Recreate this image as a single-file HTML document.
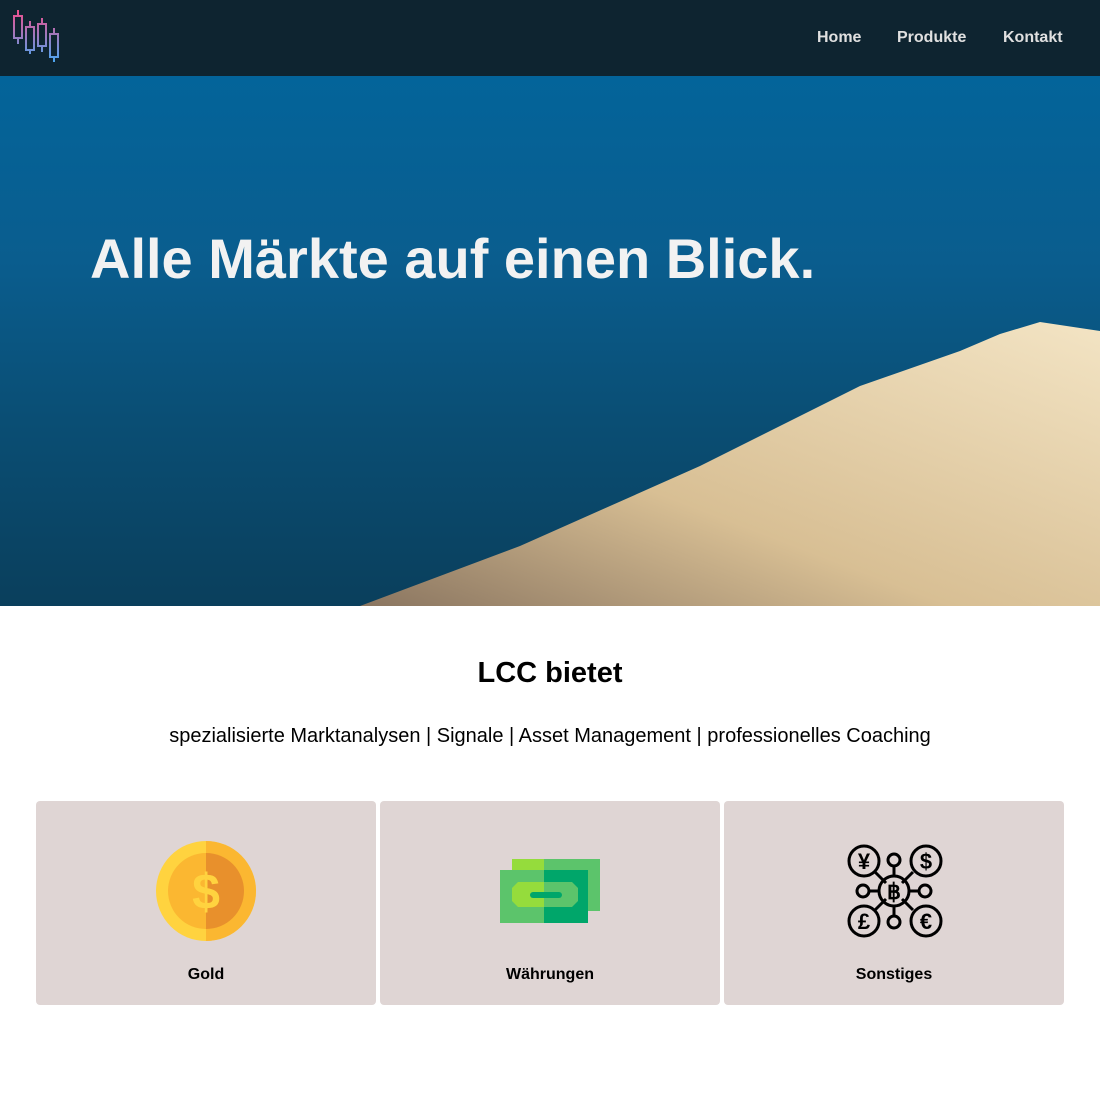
<!DOCTYPE html>
<html><head><meta charset="utf-8"><style>
*{margin:0;padding:0;box-sizing:border-box}
body{width:1100px;height:1100px;background:#fff;font-family:"Liberation Sans",Arial,sans-serif;overflow:hidden;position:relative}
.nav{position:absolute;top:0;left:0;width:1100px;height:76px;background:#0e2430;z-index:2}
.nav a{position:absolute;top:29px;color:#e0e0e0;font-weight:bold;font-size:16px;text-decoration:none}
.hero{position:absolute;top:76px;left:0;width:1100px;height:530px;background:linear-gradient(180deg,#03649a 0%,#0a5d8e 35%,#0a4e74 65%,#0a3f5c 100%);overflow:hidden}
.hero h1{position:absolute;left:90px;top:150px;color:#f2f2f2;font-size:56px;font-weight:bold}
h2{position:absolute;top:657px;width:1100px;text-align:center;font-size:29px;font-weight:bold}
.sub{position:absolute;top:725px;width:1100px;text-align:center;font-size:20px}
.card{position:absolute;top:801px;width:340px;height:204px;background:#dfd5d4;border-radius:4px}
.card span{position:absolute;top:165px;width:100%;text-align:center;font-weight:bold;font-size:16px}
.card svg{position:absolute;left:118px;top:38px}
</style></head><body>
<div class="nav">
<svg width="70" height="70" style="position:absolute;left:0;top:0" fill="none" stroke-width="2">
<defs><linearGradient id="g" gradientUnits="userSpaceOnUse" x1="0" y1="10" x2="0" y2="62"><stop offset="0" stop-color="#ee4f8e"/><stop offset="1" stop-color="#4aa6f0"/></linearGradient></defs>
<g stroke="url(#g)">
<line x1="18" y1="10" x2="18" y2="44"/><rect x="14" y="16" width="8" height="22" fill="#0e2430"/>
<line x1="30" y1="21" x2="30" y2="54"/><rect x="26" y="27" width="8" height="23" fill="#0e2430"/>
<line x1="42" y1="18" x2="42" y2="52"/><rect x="38" y="24" width="8" height="22" fill="#0e2430"/>
<line x1="54" y1="28" x2="54" y2="62"/><rect x="50" y="34" width="8" height="23" fill="#0e2430"/>
</g></svg>
<a style="left:817px">Home</a><a style="left:897px">Produkte</a><a style="left:1003px">Kontakt</a>
</div>
<div class="hero">
<svg width="1100" height="530" style="position:absolute;left:0;top:0">
<defs><linearGradient id="m" x1="0" y1="1" x2="1" y2="0"><stop offset="0" stop-color="#8a7560"/><stop offset="0.4" stop-color="#d8bf94"/><stop offset="1" stop-color="#f3e4c4"/></linearGradient></defs>
<polygon points="360,530 520,470 700,390 860,310 960,275 1000,258 1040,246 1100,255 1100,530" fill="url(#m)"/>
</svg>
<h1>Alle Märkte auf einen Blick.</h1>
</div>
<h2>LCC bietet</h2>
<div class="sub">spezialisierte Marktanalysen | Signale | Asset Management | professionelles Coaching</div>
<div class="card" style="left:36px"><svg width="104" height="104"><circle cx="52" cy="52" r="50" fill="#ffd33f"/><path d="M52 2a50 50 0 0 1 0 100z" fill="#fbb731"/><circle cx="52" cy="52" r="38" fill="#fbb731"/><path d="M52 14a38 38 0 0 1 0 76z" fill="#e8902c"/><text x="52" y="70" text-anchor="middle" font-size="50" font-weight="bold" fill="#ffd33f" font-family="Liberation Sans">$</text></svg><span>Gold</span></div>
<div class="card" style="left:380px"><svg width="104" height="104"><rect x="14" y="20" width="88" height="52" fill="#5cc46b"/><rect x="14" y="20" width="32" height="52" fill="#95dc3c"/><rect x="2" y="31" width="88" height="53" fill="#5cc46b"/><rect x="46" y="31" width="44" height="53" fill="#00a66a"/><path d="M20 43h54l6 6v13l-6 6H20l-6-6V49z" fill="#5cc46b"/><path d="M20 43h26v25H20l-6-6V49z" fill="#95dc3c"/><rect x="32" y="53" width="32" height="6" rx="3" fill="#00a66a"/></svg><span>Währungen</span></div>
<div class="card" style="left:724px"><svg width="104" height="104" fill="none" stroke="#000" stroke-width="3" font-family="Liberation Sans" font-weight="bold">
<line x1="33" y1="33" x2="44" y2="44"/><line x1="71" y1="33" x2="60" y2="44"/><line x1="33" y1="71" x2="44" y2="60"/><line x1="71" y1="71" x2="60" y2="60"/>
<line x1="52" y1="27" x2="52" y2="37"/><line x1="52" y1="67" x2="52" y2="77"/><line x1="27" y1="52" x2="37" y2="52"/><line x1="67" y1="52" x2="77" y2="52"/>
<circle cx="22" cy="22" r="15"/><circle cx="84" cy="22" r="15"/><circle cx="22" cy="82" r="15"/><circle cx="84" cy="82" r="15"/><circle cx="52" cy="52" r="15"/>
<circle cx="52" cy="21" r="6"/><circle cx="52" cy="83" r="6"/><circle cx="21" cy="52" r="6"/><circle cx="83" cy="52" r="6"/>
<g fill="#000" stroke="none" font-size="22" text-anchor="middle"><text x="22" y="30">¥</text><text x="84" y="30">$</text><text x="22" y="90">£</text><text x="84" y="90">€</text><text x="52" y="60">฿</text></g></svg><span>Sonstiges</span></div>
</body></html>
